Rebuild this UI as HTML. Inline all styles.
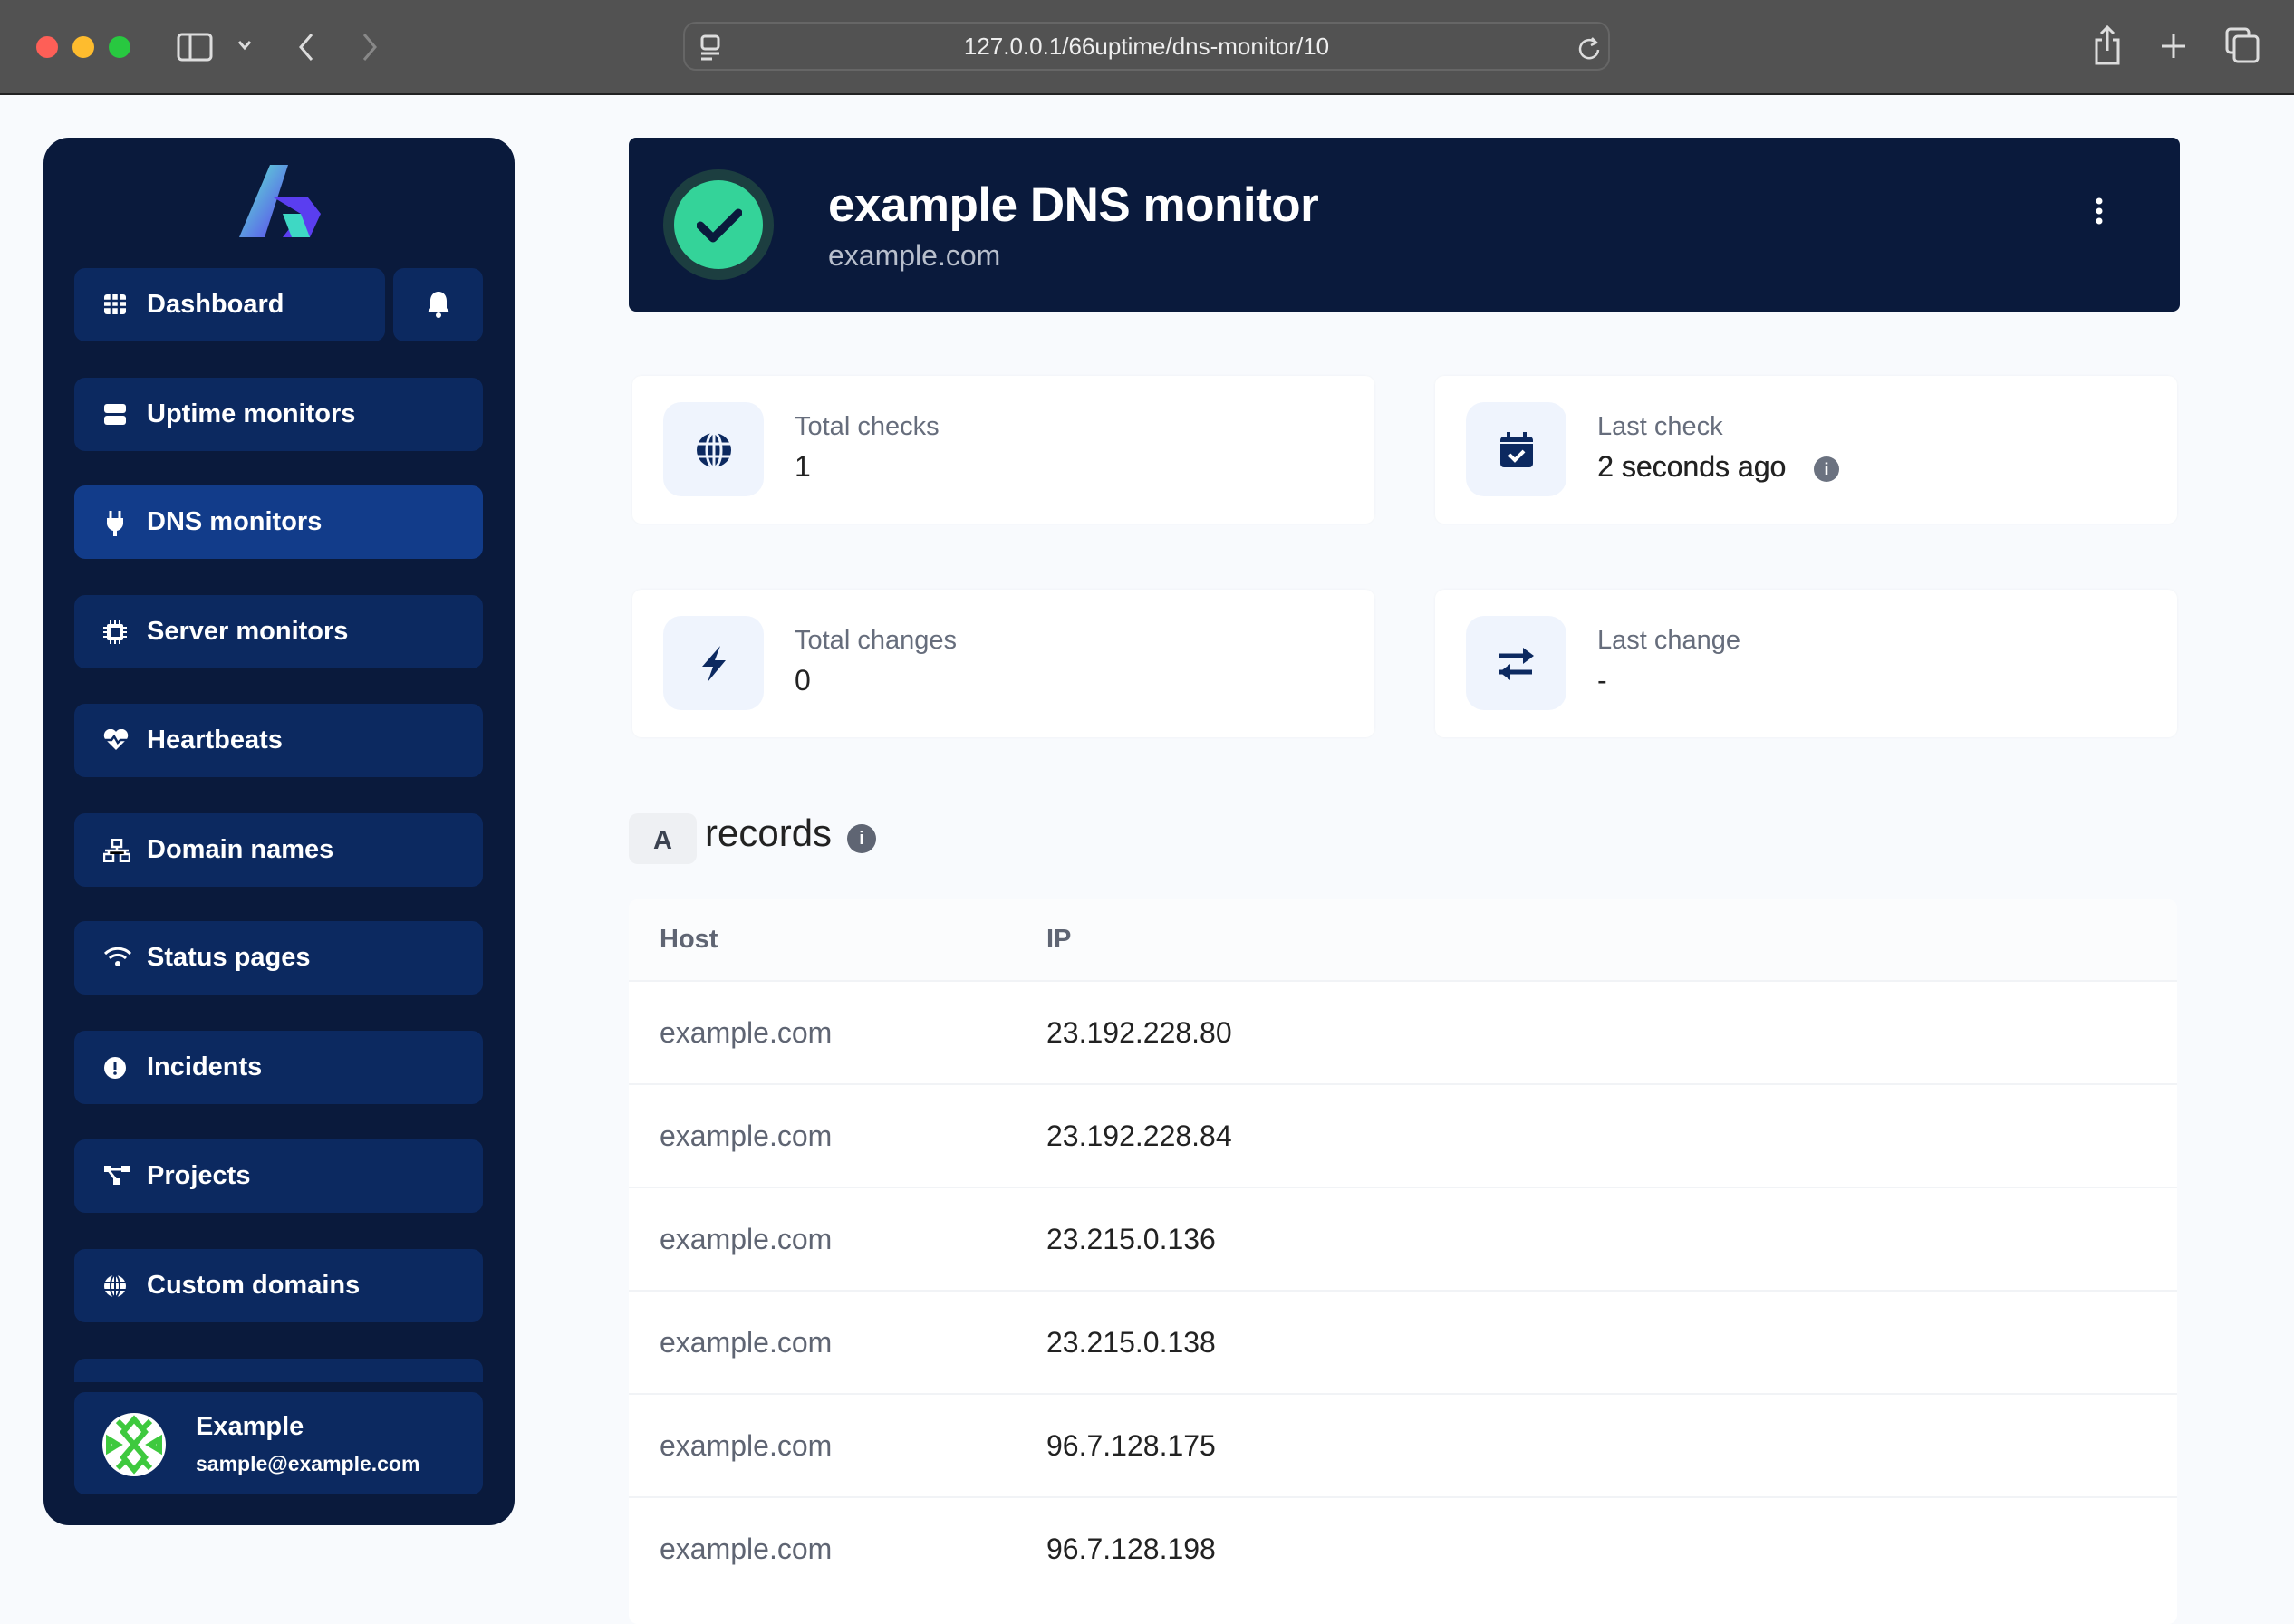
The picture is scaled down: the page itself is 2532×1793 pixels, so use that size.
<!DOCTYPE html>
<html><head><meta charset="utf-8"><style>
*{box-sizing:border-box;margin:0;padding:0}
body{width:2532px;height:1732px;overflow:hidden;background:#f8fafd;font-family:"Liberation Sans",sans-serif;position:relative}
.tb{position:absolute;left:0;top:0;width:2532px;height:105px;background:#525252;border-bottom:2px solid #222}
.dot{position:absolute;top:40px;width:24px;height:24px;border-radius:50%}
.url{position:absolute;left:754px;top:24px;width:1023px;height:54px;border:2px solid #666;border-radius:14px;color:#eee;font-size:26px;text-align:center;line-height:50px}
.sb{position:absolute;left:48px;top:152px;width:520px;height:1532px;background:#0a1a3c;border-radius:28px}
.nav{position:absolute;left:82px;width:451px;height:81px;background:#0c2960;border-radius:12px;color:#fff;font-size:29px;font-weight:bold;line-height:81px;padding-left:80px}
.nav svg{position:absolute;left:32px;top:28px}
.act{background:#123c8a}
.hdr{position:absolute;left:694px;top:152px;width:1712px;height:192px;background:#0a1a3c;border-radius:8px}
.card{position:absolute;width:819px;height:163px;background:#fff;border-radius:10px;box-shadow:0 0 3px rgba(0,0,0,.04)}
.ib{position:absolute;left:34px;top:29px;width:111px;height:104px;background:#eff4fd;border-radius:20px}
.ib svg{position:absolute;left:35px;top:32px}
.lbl{position:absolute;left:179px;top:40px;color:#666d7c;font-size:29px}
.val{position:absolute;left:179px;top:82px;color:#222;font-size:32px}
.tbl{position:absolute;left:694px;top:993px;width:1709px;height:800px;background:#fff;border-radius:10px}
.row{position:absolute;left:0;width:1709px;height:114px;border-top:2px solid #f1f3f6;font-size:32px;line-height:112px}
.row .h{position:absolute;left:34px;color:#5f6573}
.row .i{position:absolute;left:461px;color:#222}
</style></head><body>
<div class="tb">
<div class="dot" style="left:40px;background:#fe5f57"></div>
<div class="dot" style="left:80px;background:#febc2e"></div>
<div class="dot" style="left:120px;background:#28c840"></div>
<svg style="position:absolute;left:195px;top:36px" width="40" height="32"><rect x="2" y="2" width="36" height="28" rx="4" fill="none" stroke="#ddd" stroke-width="3"/><line x1="15" y1="2" x2="15" y2="30" stroke="#ddd" stroke-width="3"/></svg>
<svg style="position:absolute;left:262px;top:44px" width="16" height="12"><path d="M2 2l6 7 6-7" fill="none" stroke="#ddd" stroke-width="3"/></svg>
<svg style="position:absolute;left:328px;top:36px" width="20" height="32"><path d="M16 2L4 16l12 14" fill="none" stroke="#ddd" stroke-width="3"/></svg>
<svg style="position:absolute;left:398px;top:36px" width="20" height="32"><path d="M4 2l12 14L4 30" fill="none" stroke="#888" stroke-width="3"/></svg>
<div class="url">127.0.0.1/66uptime/dns-monitor/10
<svg style="position:absolute;left:16px;top:12px" width="24" height="30"><rect x="3" y="2" width="18" height="14" rx="3" fill="none" stroke="#ddd" stroke-width="3"/><line x1="2" y1="21" x2="22" y2="21" stroke="#ddd" stroke-width="3"/><line x1="2" y1="27" x2="14" y2="27" stroke="#ddd" stroke-width="3"/></svg>
<svg style="position:absolute;left:985px;top:13px" width="28" height="30"><path d="M20 8a10 10 0 1 0 3 8" fill="none" stroke="#ddd" stroke-width="2.5"/><path d="M16 3l5 5-6 3" fill="none" stroke="#ddd" stroke-width="2.5"/></svg></div>
<svg style="position:absolute;left:2310px;top:28px" width="32" height="44"><path d="M10 16H4v26h24V16h-6M16 2v26M9 9l7-7 7 7" fill="none" stroke="#ddd" stroke-width="3"/></svg>
<svg style="position:absolute;left:2384px;top:36px" width="30" height="30"><path d="M15 2v26M2 15h26" stroke="#ddd" stroke-width="3"/></svg>
<svg style="position:absolute;left:2456px;top:30px" width="38" height="40"><rect x="2" y="2" width="24" height="26" rx="4" fill="none" stroke="#ddd" stroke-width="3"/><rect x="10" y="10" width="26" height="28" rx="4" fill="#525252" stroke="#ddd" stroke-width="3"/></svg>
</div>

<div class="sb"></div>
<svg style="position:absolute;left:262px;top:180px" width="92" height="84"><defs><linearGradient id="g" x1="0" y1="0" x2="1" y2="1"><stop offset="0" stop-color="#5ff0d0"/><stop offset="1" stop-color="#5a3ef0"/></linearGradient></defs><path d="M36 2h20L30 82H2z" fill="url(#g)"/><path d="M40 38h38l14 18-12 26H50l20-26z" fill="#5a3ef0"/><path d="M50 56h20l10 26H60z" fill="#3ed8c4"/></svg>

<div class="nav" style="top:296px;width:343px">
<svg width="26" height="24"><rect x="1" y="1" width="24" height="22" rx="3" fill="#fff"/><path d="M1 8h24M1 15h24M9 1v22M17 1v22" stroke="#0c2960" stroke-width="2.5"/></svg>Dashboard</div>
<div class="nav" style="top:296px;left:434px;width:99px;padding:0"><svg style="left:36px;top:24px" width="28" height="32"><path d="M14 2c-6 0-9 5-9 10v8l-3 5h24l-3-5v-8c0-5-3-10-9-10z" fill="#fff"/><circle cx="14" cy="28" r="3" fill="#fff"/></svg></div>
<div class="nav" style="top:417px"><svg width="26" height="26"><rect x="1" y="1" width="24" height="10" rx="3" fill="#fff"/><rect x="1" y="14" width="24" height="10" rx="3" fill="#fff"/></svg>Uptime monitors</div>
<div class="nav act" style="top:536px"><svg width="26" height="28"><path d="M8 0v8M18 0v8" stroke="#fff" stroke-width="3"/><path d="M4 8h18v6a9 9 0 0 1-7 8v6h-4v-6a9 9 0 0 1-7-8z" fill="#fff"/></svg>DNS monitors</div>
<div class="nav" style="top:657px"><svg width="26" height="26"><rect x="4" y="4" width="18" height="18" rx="2" fill="#fff"/><rect x="8" y="8" width="10" height="10" fill="#0c2960"/><path d="M0 8h4M0 13h4M0 18h4M22 8h4M22 13h4M22 18h4M8 0v4M13 0v4M18 0v4M8 22v4M13 22v4M18 22v4" stroke="#fff" stroke-width="2"/></svg>Server monitors</div>
<div class="nav" style="top:777px"><svg width="28" height="24"><path d="M14 23L2 11a6 6 0 0 1 12-8 6 6 0 0 1 12 8z" fill="#fff"/><path d="M2 12h7l3-4 4 7 3-3h7" fill="none" stroke="#0c2960" stroke-width="2.5"/></svg>Heartbeats</div>
<div class="nav" style="top:898px"><svg width="30" height="26"><rect x="10" y="1" width="10" height="8" fill="none" stroke="#fff" stroke-width="2.5"/><rect x="1" y="17" width="10" height="8" fill="none" stroke="#fff" stroke-width="2.5"/><rect x="19" y="17" width="10" height="8" fill="none" stroke="#fff" stroke-width="2.5"/><path d="M15 9v4M6 17v-4h18v4M2 13h26" stroke="#fff" stroke-width="2.5"/></svg>Domain names</div>
<div class="nav" style="top:1017px"><svg width="32" height="24"><path d="M2 8a20 20 0 0 1 28 0M7 13a13 13 0 0 1 18 0" fill="none" stroke="#fff" stroke-width="3"/><circle cx="16" cy="19" r="3" fill="#fff"/></svg>Status pages</div>
<div class="nav" style="top:1138px"><svg width="26" height="26"><circle cx="13" cy="13" r="12" fill="#fff"/><path d="M13 6v9" stroke="#0c2960" stroke-width="3"/><circle cx="13" cy="19" r="1.8" fill="#0c2960"/></svg>Incidents</div>
<div class="nav" style="top:1258px"><svg width="30" height="24"><rect x="1" y="1" width="8" height="7" fill="#fff"/><rect x="20" y="1" width="9" height="7" fill="#fff"/><rect x="11" y="15" width="8" height="7" fill="#fff"/><path d="M5 5h20M5 5l10 13" stroke="#fff" stroke-width="3"/></svg>Projects</div>
<div class="nav" style="top:1379px"><svg width="26" height="26"><circle cx="13" cy="13" r="12" fill="#fff"/><path d="M1 9h24M1 17h24M13 1v24" stroke="#0c2960" stroke-width="2"/><ellipse cx="13" cy="13" rx="5" ry="12" fill="none" stroke="#0c2960" stroke-width="2"/></svg>Custom domains</div>
<div style="position:absolute;left:82px;top:1500px;width:451px;height:26px;background:#0c2960;border-radius:12px 12px 0 0"></div>
<div style="position:absolute;left:82px;top:1537px;width:451px;height:113px;background:#0c2960;border-radius:12px">
<svg style="position:absolute;left:30px;top:22px" width="72" height="72"><circle cx="36" cy="36" r="35" fill="#fff"/><path d="M36 8l12 14-12 14-12-14zM36 36l12 14-12 14-12-14zM8 30l10 6-10 6zM64 30l-10 6 10 6zM18 10l8 8M54 10l-8 8M18 62l8-8M54 62l-8-8" fill="none" stroke="#3ec93e" stroke-width="6"/></svg>
<div style="position:absolute;left:134px;top:22px;color:#fff;font-size:29px;font-weight:bold">Example</div>
<div style="position:absolute;left:134px;top:66px;color:#fff;font-size:23px;font-weight:bold">sample@example.com</div></div>

<div class="hdr">
<div style="position:absolute;left:38px;top:35px;width:122px;height:122px;border-radius:50%;background:#1c3e40"></div>
<div style="position:absolute;left:50px;top:47px;width:98px;height:98px;border-radius:50%;background:#34d399"></div>
<svg style="position:absolute;left:75px;top:77px" width="50" height="40"><path d="M4 20l14 14L46 6" fill="none" stroke="#0a1a3c" stroke-width="9" stroke-linecap="round" stroke-linejoin="round"/></svg>
<div style="position:absolute;left:220px;top:44px;color:#fff;font-size:53px;font-weight:bold;letter-spacing:-0.5px">example DNS monitor</div>
<div style="position:absolute;left:220px;top:112px;color:#b8bfcc;font-size:32px">example.com</div>
<svg style="position:absolute;left:1618px;top:66px" width="10" height="30"><circle cx="5" cy="4" r="3.5" fill="#fff"/><circle cx="5" cy="15" r="3.5" fill="#fff"/><circle cx="5" cy="26" r="3.5" fill="#fff"/></svg>
</div>

<div class="card" style="left:698px;top:415px"><div class="ib"><svg width="42" height="42"><circle cx="21" cy="21" r="19" fill="#0c2960"/><path d="M2 14h38M2 28h38M21 2v38" stroke="#eff4fd" stroke-width="3"/><ellipse cx="21" cy="21" rx="8" ry="19" fill="none" stroke="#eff4fd" stroke-width="3"/></svg></div><div class="lbl">Total checks</div><div class="val">1</div></div>
<div class="card" style="left:1584px;top:415px"><div class="ib"><svg width="42" height="42"><rect x="3" y="6" width="36" height="34" rx="4" fill="#0c2960"/><path d="M12 1v8M30 1v8" stroke="#0c2960" stroke-width="4"/><path d="M3 13h36" stroke="#eff4fd" stroke-width="2"/><path d="M13 26l6 6 10-10" fill="none" stroke="#fff" stroke-width="4"/></svg></div><div class="lbl">Last check</div><div class="val" style="text-shadow:0.4px 0 0 #222">2 seconds ago <span style="display:inline-block;width:28px;height:28px;border-radius:50%;background:#6b7280;color:#fff;font-size:18px;font-weight:bold;text-align:center;line-height:28px;vertical-align:2px;margin-left:22px;text-shadow:none">i</span></div></div>
<div class="card" style="left:698px;top:651px"><div class="ib"><svg width="42" height="42"><path d="M28 1L8 24h12l-6 17 20-24H22z" fill="#0c2960"/></svg></div><div class="lbl">Total changes</div><div class="val">0</div></div>
<div class="card" style="left:1584px;top:651px"><div class="ib"><svg width="42" height="42"><path d="M2 12h30M2 30h36" stroke="#0c2960" stroke-width="5"/><path d="M28 3l12 9-12 9zM14 21L2 30l12 9z" fill="#0c2960"/></svg></div><div class="lbl">Last change</div><div class="val">-</div></div>

<div style="position:absolute;left:694px;top:898px;width:75px;height:56px;background:#eef0f3;border-radius:10px;color:#3b4250;font-size:29px;font-weight:bold;text-align:center;line-height:60px">A</div>
<div style="position:absolute;left:778px;top:896px;color:#222;font-size:42px">records</div>
<div style="position:absolute;left:935px;top:910px;width:32px;height:32px;border-radius:50%;background:#5f6573;color:#fff;font-size:20px;font-weight:bold;text-align:center;line-height:32px">i</div>

<div class="tbl">
<div style="position:absolute;left:0;top:0;width:1709px;height:89px;background:#fbfcfd;border-radius:10px 10px 0 0;font-size:29px;font-weight:bold;color:#5f6573;line-height:89px"><span style="position:absolute;left:34px">Host</span><span style="position:absolute;left:461px">IP</span></div>
<div class="row" style="top:89px"><span class="h">example.com</span><span class="i">23.192.228.80</span></div>
<div class="row" style="top:203px"><span class="h">example.com</span><span class="i">23.192.228.84</span></div>
<div class="row" style="top:317px"><span class="h">example.com</span><span class="i">23.215.0.136</span></div>
<div class="row" style="top:431px"><span class="h">example.com</span><span class="i">23.215.0.138</span></div>
<div class="row" style="top:545px"><span class="h">example.com</span><span class="i">96.7.128.175</span></div>
<div class="row" style="top:659px"><span class="h">example.com</span><span class="i">96.7.128.198</span></div>
</div>
</body></html>
